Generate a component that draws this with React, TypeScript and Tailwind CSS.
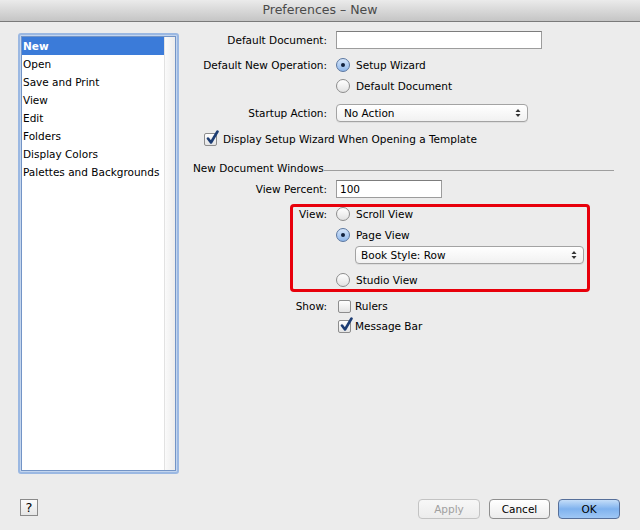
import React from "react";

const font = { fontFamily: '"DejaVu Sans", "Liberation Sans", sans-serif' };

function Radio({ checked }: { checked?: boolean }) {
  return (
    <div
      className={
        "w-[14px] h-[14px] rounded-full border flex items-center justify-center shrink-0 " +
        (checked
          ? "border-[#5a76a0] bg-gradient-to-b from-[#d6e6fa] to-[#8fb7ea]"
          : "border-[#8d8d8d] bg-gradient-to-b from-[#ffffff] to-[#e2e2e2]")
      }
    >
      {checked && <div className="w-[4px] h-[4px] rounded-full bg-[#10213d]" />}
    </div>
  );
}

function Check({ checked }: { checked?: boolean }) {
  return (
    <div className="relative w-[13px] h-[13px] shrink-0 border border-[#8d8d8d] rounded-[2px] bg-gradient-to-b from-[#ffffff] to-[#e4e4e4]">
      {checked && (
        <svg className="absolute left-[1px] top-[-4px]" width="13" height="15" viewBox="0 0 13 15">
          <path d="M2 8.5 L5 12.5 L11.5 1.5" fill="none" stroke="#1d3d73" strokeWidth="2.6" strokeLinecap="round" strokeLinejoin="round" />
        </svg>
      )}
    </div>
  );
}

function Select({ text, w, pl }: { text: string; w: string; pl: string }) {
  return (
    <div className={"h-[18px] rounded-[4px] border border-[#a3a3a3] bg-gradient-to-b from-[#ffffff] to-[#f1f1f1] flex items-center justify-between pr-[6px] shadow-[0_1px_0_rgba(0,0,0,0.06)] " + w + " " + pl}>
      <span className="text-[10.5px] text-black leading-none">{text}</span>
      <svg width="6" height="10" viewBox="0 0 6 10">
        <path d="M0.5 4 L3 1 L5.5 4 Z" fill="#333" />
        <path d="M0.5 6 L3 9 L5.5 6 Z" fill="#333" />
      </svg>
    </div>
  );
}

function Label({ children }: { children: React.ReactNode }) {
  return <div className="w-[137px] text-right text-[10.5px] text-black shrink-0 leading-none whitespace-nowrap">{children}</div>;
}

export default function App() {
  const items = ["New", "Open", "Save and Print", "View", "Edit", "Folders", "Display Colors", "Palettes and Backgrounds"];
  return (
    <div style={font} className="w-[640px] h-[530px] bg-[#ececec] flex flex-col overflow-hidden">
      <div className="h-[22px] shrink-0 bg-gradient-to-b from-[#ebebeb] to-[#c5c5c5] border-b border-[#7a7a7a] flex items-center justify-center">
        <span className="text-[12.5px] text-[#4a4a4a] leading-none">Preferences – New</span>
      </div>

      <div className="flex h-[452px] shrink-0">
        {/* left list */}
        <div className="pl-[18px] pt-[11px]">
          <div className="w-[161px] h-[441px] rounded-[3px] border-[2px] border-[#9bb8e2] p-[1px] bg-[#c3d5ee]">
            <div className="w-full h-full bg-white flex border border-[#7394c6]">
              <div className="flex-1 flex flex-col min-w-0">
                {items.map((it, i) => (
                  <div
                    key={it}
                    className={
                      "h-[18px] flex items-center pl-[1px] text-[10.5px] leading-none whitespace-nowrap " +
                      (i === 0 ? "bg-[#3b7bd9] text-white font-bold" : "text-black")
                    }
                  >
                    {it}
                  </div>
                ))}
              </div>
              <div className="w-[11px] shrink-0 border-l border-[#e2e2e2] bg-gradient-to-r from-[#fafafa] to-[#ececec]" />
            </div>
          </div>
        </div>

        {/* right form */}
        <div className="pl-[11px] pt-[9px] flex flex-col">
          <div className="flex items-center gap-[9px] h-[18px]">
            <Label>Default Document:</Label>
            <div className="w-[206px] h-[18px] bg-white border border-[#9c9c9c] border-t-[#7d7d7d]" />
          </div>
          <div className="flex items-center gap-[9px] h-[20px] mt-[6px]">
            <Label>Default New Operation:</Label>
            <div className="flex items-center gap-[6px]">
              <Radio checked />
              <span className="text-[10.5px] leading-none">Setup Wizard</span>
            </div>
          </div>
          <div className="flex items-center gap-[9px] h-[20px] mt-[1px]">
            <div className="w-[137px] shrink-0" />
            <div className="flex items-center gap-[6px]">
              <Radio />
              <span className="text-[10.5px] leading-none">Default Document</span>
            </div>
          </div>
          <div className="flex items-center gap-[9px] h-[18px] mt-[8px]">
            <Label>Startup Action:</Label>
            <Select text="No Action" w="w-[192px]" pl="pl-[7px]" />
          </div>
          <div className="flex items-center gap-[6px] h-[20px] mt-[7px] pl-[14px]">
            <Check checked />
            <span className="text-[10.5px] leading-none">Display Setup Wizard When Opening a Template</span>
          </div>

          <div className="flex items-end h-[16px] mt-[10px] pl-[3px] w-[424px]">
            <span className="text-[10.5px] leading-none pb-[2px] whitespace-nowrap">New Document Windows</span>
            <div className="flex-1 h-px bg-[#9e9e9e] mb-[4px]" />
          </div>

          <div className="flex items-center gap-[9px] h-[18px] mt-[5px]">
            <Label>View Percent:</Label>
            <div className="w-[106px] h-[18px] bg-white border border-[#9c9c9c] border-t-[#7d7d7d] flex items-center pl-[3px] text-[10.5px] leading-none">
              100
            </div>
          </div>

          <div className="relative mt-[6px]">
            <div className="absolute left-[100px] top-0 w-[300px] h-[88px] border-[3px] border-[#e8000b] rounded-[4px] pointer-events-none" />
            <div className="flex items-center gap-[9px] h-[20px]">
              <Label>View:</Label>
              <div className="flex items-center gap-[6px]">
                <Radio />
                <span className="text-[10.5px] leading-none">Scroll View</span>
              </div>
            </div>
            <div className="flex items-center gap-[9px] h-[20px] mt-[1px]">
              <div className="w-[137px] shrink-0" />
              <div className="flex items-center gap-[6px]">
                <Radio checked />
                <span className="text-[10.5px] leading-none">Page View</span>
              </div>
            </div>
            <div className="flex items-center h-[18px] mt-[1px] pl-[165px]">
              <Select text="Book Style: Row" w="w-[229px]" pl="pl-[5px]" />
            </div>
            <div className="flex items-center gap-[9px] h-[20px] mt-[6px]">
              <div className="w-[137px] shrink-0" />
              <div className="flex items-center gap-[6px]">
                <Radio />
                <span className="text-[10.5px] leading-none">Studio View</span>
              </div>
            </div>
          </div>

          <div className="flex items-center gap-[9px] h-[20px] mt-[6px]">
            <Label>Show:</Label>
            <div className="flex items-center gap-[4px] pl-[2px]">
              <Check />
              <span className="text-[10.5px] leading-none">Rulers</span>
            </div>
          </div>
          <div className="flex items-center gap-[9px] h-[20px]">
            <div className="w-[137px] shrink-0" />
            <div className="flex items-center gap-[4px] pl-[2px]">
              <Check checked />
              <span className="text-[10.5px] leading-none">Message Bar</span>
            </div>
          </div>
        </div>
      </div>

      {/* footer */}
      <div className="flex-1 flex items-start justify-between px-[20px] pt-[25px]">
        <div className="w-[18px] h-[17px] border border-[#8a8a8a] bg-gradient-to-b from-[#fbfbfb] to-[#e6e6e6] flex items-center justify-center text-[13px] leading-none text-black">
          ?
        </div>
        <div className="flex items-center">
          <div className="w-[62px] h-[20px] rounded-[4px] border border-[#c3c3c3] bg-gradient-to-b from-[#f7f7f7] to-[#ececec] flex items-center justify-center text-[10.5px] text-[#a0a0a0] leading-none">
            Apply
          </div>
          <div className="ml-[9px] w-[61px] h-[20px] rounded-[4px] border border-[#8e8e8e] bg-gradient-to-b from-[#ffffff] to-[#ececec] flex items-center justify-center text-[10.5px] text-black leading-none">
            Cancel
          </div>
          <div className="ml-[8px] w-[62px] h-[20px] rounded-[4px] border border-[#566f9a] bg-gradient-to-b from-[#c4ddf8] via-[#7fb2ee] to-[#9fc7f5] flex items-center justify-center text-[10.5px] text-black leading-none">
            OK
          </div>
        </div>
      </div>
    </div>
  );
}
